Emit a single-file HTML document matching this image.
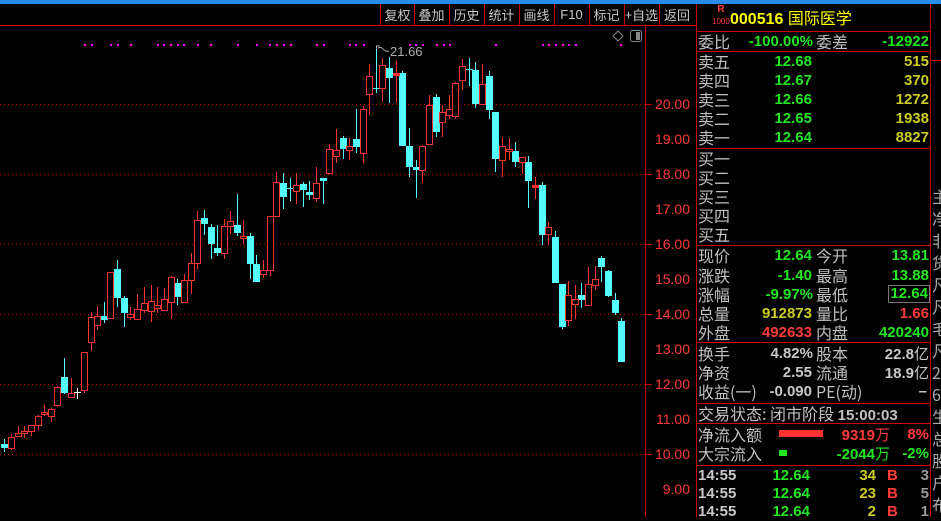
<!DOCTYPE html>
<html><head><meta charset="utf-8"><style>
*{margin:0;padding:0;box-sizing:border-box}
body{width:941px;height:517px;background:#000;overflow:hidden;position:relative;font-family:"Liberation Sans","Noto Sans CJK SC",sans-serif}
.a{position:absolute;white-space:nowrap;line-height:19px}
.l{color:#c0c0c0;font-size:16px;font-family:"Noto Sans CJK SC",sans-serif;left:698px}
.n{font-size:15px;font-weight:bold;text-align:right}
.g{color:#22e622}.y{color:#cccc22}.r{color:#ff3a3a}.w{color:#c8c8c8}
.btn{position:absolute;top:5px;height:20px;color:#c8c8c8;font-size:13px;text-align:center;line-height:20px;font-family:"Noto Sans CJK SC",sans-serif}
.ax{position:absolute;right:251px;color:#ff3a3a;font-size:14px;line-height:14px}
</style></head><body>
<div style="position:absolute;left:0;top:0;width:941px;height:4px;background:#2a8ce8"></div>
<div style="position:absolute;left:0;top:25px;width:696px;height:1px;background:#c00"></div>
<div class="btn" style="left:381px;width:33px">复权</div>
<div class="btn" style="left:414px;width:35px">叠加</div>
<div class="btn" style="left:449px;width:35px">历史</div>
<div class="btn" style="left:484px;width:35px">统计</div>
<div class="btn" style="left:519px;width:35px">画线</div>
<div class="btn" style="left:554px;width:35px;font-family:'Liberation Sans',sans-serif">F10</div>
<div class="btn" style="left:589px;width:35px">标记</div>
<div class="btn" style="left:624px;width:35px">+自选</div>
<div class="btn" style="left:659px;width:36px">返回</div>
<svg width="941" height="517" style="position:absolute;left:0;top:0">
<g stroke="#c00" stroke-width="1">
<line x1="380.5" y1="4" x2="380.5" y2="25"/><line x1="414.5" y1="4" x2="414.5" y2="25"/><line x1="449.5" y1="4" x2="449.5" y2="25"/><line x1="484.5" y1="4" x2="484.5" y2="25"/><line x1="519.5" y1="4" x2="519.5" y2="25"/><line x1="554.5" y1="4" x2="554.5" y2="25"/><line x1="589.5" y1="4" x2="589.5" y2="25"/><line x1="624.5" y1="4" x2="624.5" y2="25"/><line x1="659.5" y1="4" x2="659.5" y2="25"/>
<line x1="645.5" y1="25" x2="645.5" y2="517"/>
<line x1="696.5" y1="4" x2="696.5" y2="517"/><line x1="930.5" y1="4" x2="930.5" y2="517"/>
<line x1="931" y1="60.5" x2="941" y2="60.5"/>
<line x1="696" y1="31.5" x2="930" y2="31.5"/><line x1="696" y1="51.5" x2="930" y2="51.5"/><line x1="696" y1="148.5" x2="930" y2="148.5"/><line x1="696" y1="245.5" x2="930" y2="245.5"/><line x1="696" y1="342.5" x2="930" y2="342.5"/><line x1="696" y1="403.5" x2="930" y2="403.5"/><line x1="696" y1="423.5" x2="930" y2="423.5"/><line x1="696" y1="465.5" x2="930" y2="465.5"/>
</g>
<g stroke="#c00" stroke-dasharray="1,3">
<line x1="0" y1="104.5" x2="645" y2="104.5"/><line x1="0" y1="174.5" x2="645" y2="174.5"/><line x1="0" y1="244.5" x2="645" y2="244.5"/><line x1="0" y1="314.5" x2="645" y2="314.5"/><line x1="0" y1="384.5" x2="645" y2="384.5"/><line x1="0" y1="454.5" x2="645" y2="454.5"/>
</g>
<g stroke="#c00"><line x1="645" y1="104.5" x2="652" y2="104.5"/><line x1="645" y1="174.5" x2="652" y2="174.5"/><line x1="645" y1="244.5" x2="652" y2="244.5"/><line x1="645" y1="314.5" x2="652" y2="314.5"/><line x1="645" y1="384.5" x2="652" y2="384.5"/><line x1="645" y1="454.5" x2="652" y2="454.5"/></g>
<path d="M618 31 L623 36 L618 41 L613 36Z" fill="none" stroke="#888"/>
<rect x="630.5" y="30.5" width="11" height="11" rx="2" fill="none" stroke="#888"/><rect x="636" y="32" width="4" height="8" fill="#888"/>
<g fill="#ff00ff">
<rect x="84" y="44" width="2" height="2"/><rect x="91" y="44" width="2" height="2"/><rect x="110" y="44" width="2" height="2"/><rect x="117" y="44" width="2" height="2"/><rect x="130" y="44" width="2" height="2"/><rect x="157" y="44" width="2" height="2"/><rect x="163" y="44" width="2" height="2"/><rect x="170" y="44" width="2" height="2"/><rect x="177" y="44" width="2" height="2"/><rect x="183" y="44" width="2" height="2"/><rect x="197" y="44" width="2" height="2"/><rect x="210" y="44" width="2" height="2"/><rect x="237" y="44" width="2" height="2"/><rect x="256" y="44" width="2" height="2"/><rect x="269" y="44" width="2" height="2"/><rect x="276" y="44" width="2" height="2"/><rect x="283" y="44" width="2" height="2"/><rect x="290" y="44" width="2" height="2"/><rect x="316" y="44" width="2" height="2"/><rect x="323" y="44" width="2" height="2"/><rect x="349" y="44" width="2" height="2"/><rect x="355" y="44" width="2" height="2"/><rect x="363" y="44" width="2" height="2"/><rect x="409" y="44" width="2" height="2"/><rect x="415" y="44" width="2" height="2"/><rect x="422" y="44" width="2" height="2"/><rect x="436" y="44" width="2" height="2"/><rect x="443" y="44" width="2" height="2"/><rect x="449" y="44" width="2" height="2"/><rect x="495" y="44" width="2" height="2"/><rect x="542" y="44" width="2" height="2"/><rect x="548" y="44" width="2" height="2"/><rect x="555" y="44" width="2" height="2"/><rect x="562" y="44" width="2" height="2"/><rect x="568" y="44" width="2" height="2"/><rect x="575" y="44" width="2" height="2"/><rect x="620" y="44" width="2" height="2"/>
</g>
<path d="M376.5 49 V46 H380 M378 48 Q381 46 384 50 Q387 52 389 51" fill="none" stroke="#aaa"/>
<text x="390" y="56" fill="#b0b0b0" font-size="13" font-family="Liberation Sans">21.66</text>
<g id="c"></g>
</svg>
<svg width="646" height="517" style="position:absolute;left:0;top:0">
<g fill="#54ffff">
<!-- cyan: wick + body -->
<rect x="4" y="439" width="1" height="13"/><rect x="1" y="444" width="7" height="4"/>
<rect x="64" y="358" width="1" height="36"/><rect x="61" y="377" width="7" height="16"/>
<rect x="104" y="302" width="1" height="21"/><rect x="101" y="316" width="7" height="4"/>
<rect x="117" y="260" width="1" height="47"/><rect x="114" y="269" width="7" height="29"/>
<rect x="124" y="296" width="1" height="31"/><rect x="121" y="298" width="7" height="15"/>
<rect x="177" y="279" width="1" height="26"/><rect x="174" y="283" width="7" height="14"/>
<rect x="204" y="210" width="1" height="25"/><rect x="201" y="218" width="7" height="6"/>
<rect x="211" y="224" width="1" height="35"/><rect x="208" y="227" width="7" height="17"/>
<rect x="217" y="225" width="1" height="31"/><rect x="214" y="248" width="7" height="5"/>
<rect x="237" y="194" width="1" height="42"/><rect x="234" y="225" width="7" height="8"/>
<rect x="250" y="233" width="1" height="46"/><rect x="247" y="236" width="7" height="28"/>
<rect x="256" y="255" width="1" height="27"/><rect x="253" y="264" width="7" height="18"/>
<rect x="283" y="173" width="1" height="36"/><rect x="280" y="183" width="7" height="14"/>
<rect x="290" y="178" width="1" height="23"/><rect x="287" y="188" width="7" height="1"/>
<rect x="303" y="182" width="1" height="25"/><rect x="300" y="184" width="7" height="6"/>
<rect x="309" y="181" width="1" height="19"/><rect x="306" y="192" width="7" height="3"/>
<rect x="323" y="178" width="1" height="26"/><rect x="320" y="178" width="7" height="3"/>
<rect x="343" y="136" width="1" height="23"/><rect x="340" y="138" width="7" height="11"/>
<rect x="356" y="109" width="1" height="44"/><rect x="353" y="139" width="7" height="8"/>
<rect x="376" y="49" width="1" height="44"/><rect x="373" y="88" width="7" height="1"/>
<rect x="389" y="57" width="1" height="46"/><rect x="386" y="68" width="7" height="10"/>
<rect x="402" y="71" width="1" height="75"/><rect x="399" y="73" width="7" height="73"/>
<rect x="409" y="128" width="1" height="49"/><rect x="406" y="146" width="7" height="21"/>
<rect x="416" y="160" width="1" height="38"/><rect x="413" y="167" width="7" height="3"/>
<rect x="436" y="94" width="1" height="43"/><rect x="433" y="97" width="7" height="35"/>
<rect x="469" y="58" width="1" height="28"/><rect x="466" y="69" width="7" height="1"/>
<rect x="475" y="62" width="1" height="46"/><rect x="472" y="70" width="7" height="34"/>
<rect x="489" y="71" width="1" height="48"/><rect x="486" y="76" width="7" height="34"/>
<rect x="495" y="112" width="1" height="60"/><rect x="492" y="112" width="7" height="47"/>
<rect x="515" y="142" width="1" height="25"/><rect x="512" y="151" width="7" height="11"/>
<rect x="528" y="156" width="1" height="52"/><rect x="525" y="162" width="7" height="19"/>
<rect x="542" y="182" width="1" height="63"/><rect x="539" y="185" width="7" height="50"/>
<rect x="555" y="231" width="1" height="52"/><rect x="552" y="237" width="7" height="46"/>
<rect x="562" y="284" width="1" height="45"/><rect x="559" y="284" width="7" height="43"/>
<rect x="581" y="283" width="1" height="25"/><rect x="578" y="295" width="7" height="5"/>
<rect x="601" y="256" width="1" height="26"/><rect x="598" y="258" width="7" height="9"/>
<rect x="608" y="270" width="1" height="27"/><rect x="605" y="271" width="7" height="25"/>
<rect x="615" y="293" width="1" height="22"/><rect x="612" y="300" width="7" height="13"/>
<rect x="621" y="318" width="1" height="44"/><rect x="618" y="321" width="7" height="41"/>
</g>
<g fill="#fff"><rect x="77" y="388" width="1" height="11"/><rect x="74" y="392" width="7" height="1"/></g>
<g fill="#ff3232">
<rect x="11" y="434" width="1" height="16"/><rect x="18" y="426" width="1" height="11"/><rect x="24" y="426" width="1" height="12"/><rect x="31" y="425" width="1" height="11"/><rect x="38" y="415" width="1" height="15"/><rect x="44" y="405" width="1" height="11"/><rect x="51" y="408" width="1" height="14"/><rect x="57" y="386" width="1" height="21"/><rect x="71" y="378" width="1" height="20"/><rect x="84" y="352" width="1" height="41"/><rect x="91" y="312" width="1" height="39"/><rect x="97" y="306" width="1" height="24"/><rect x="110" y="272" width="1" height="47"/><rect x="130" y="307" width="1" height="13"/><rect x="137" y="294" width="1" height="26"/><rect x="144" y="287" width="1" height="26"/><rect x="151" y="285" width="1" height="37"/><rect x="157" y="287" width="1" height="26"/><rect x="164" y="288" width="1" height="23"/><rect x="171" y="276" width="1" height="43"/><rect x="184" y="274" width="1" height="29"/><rect x="191" y="253" width="1" height="41"/><rect x="197" y="211" width="1" height="58"/><rect x="224" y="219" width="1" height="40"/><rect x="230" y="211" width="1" height="23"/><rect x="243" y="220" width="1" height="24"/><rect x="263" y="260" width="1" height="18"/><rect x="270" y="216" width="1" height="60"/><rect x="276" y="172" width="1" height="45"/><rect x="296" y="173" width="1" height="31"/><rect x="316" y="167" width="1" height="35"/><rect x="329" y="144" width="1" height="30"/><rect x="336" y="129" width="1" height="34"/><rect x="349" y="138" width="1" height="22"/><rect x="363" y="106" width="1" height="57"/><rect x="369" y="64" width="1" height="51"/><rect x="382" y="58" width="1" height="44"/><rect x="396" y="61" width="1" height="42"/><rect x="393" y="73" width="7" height="3"/><rect x="422" y="145" width="1" height="38"/><rect x="429" y="95" width="1" height="50"/><rect x="442" y="105" width="1" height="32"/><rect x="449" y="95" width="1" height="24"/><rect x="455" y="82" width="1" height="37"/><rect x="462" y="59" width="1" height="31"/><rect x="482" y="64" width="1" height="41"/><rect x="502" y="137" width="1" height="40"/><rect x="509" y="138" width="1" height="22"/><rect x="522" y="157" width="1" height="17"/><rect x="535" y="177" width="1" height="22"/><rect x="532" y="185" width="7" height="3"/><rect x="548" y="222" width="1" height="23"/><rect x="568" y="281" width="1" height="45"/><rect x="575" y="285" width="1" height="34"/><rect x="588" y="267" width="1" height="39"/><rect x="595" y="266" width="1" height="24"/>
</g>
<g fill="#000" stroke="#ff3232">
<rect x="8.5" y="437.5" width="6" height="11"/><rect x="15.5" y="433.5" width="6" height="3"/><rect x="21.5" y="431.5" width="6" height="2"/><rect x="28.5" y="425.5" width="6" height="6"/><rect x="35.5" y="416.5" width="6" height="9"/><rect x="41.5" y="412.5" width="6" height="2"/><rect x="48.5" y="409.5" width="6" height="7"/><rect x="54.5" y="387.5" width="6" height="18"/><rect x="68.5" y="393.5" width="6" height="4"/><rect x="81.5" y="352.5" width="6" height="38"/><rect x="88.5" y="317.5" width="6" height="25"/><rect x="94.5" y="316.5" width="6" height="9"/><rect x="107.5" y="272.5" width="6" height="46"/><rect x="127.5" y="314.5" width="6" height="3"/><rect x="134.5" y="309.5" width="6" height="10"/><rect x="141.5" y="303.5" width="6" height="7"/><rect x="148.5" y="301.5" width="6" height="10"/><rect x="154.5" y="305.5" width="6" height="3"/><rect x="161.5" y="299.5" width="6" height="11"/><rect x="168.5" y="277.5" width="6" height="25"/><rect x="181.5" y="280.5" width="6" height="22"/><rect x="188.5" y="263.5" width="6" height="17"/><rect x="194.5" y="220.5" width="6" height="43"/><rect x="221.5" y="226.5" width="6" height="27"/><rect x="227.5" y="221.5" width="6" height="5"/><rect x="240.5" y="236.5" width="6" height="2"/><rect x="260.5" y="270.5" width="6" height="4"/><rect x="267.5" y="216.5" width="6" height="54"/><rect x="273.5" y="182.5" width="6" height="34"/><rect x="293.5" y="185.5" width="6" height="6"/><rect x="313.5" y="183.5" width="6" height="15"/><rect x="326.5" y="149.5" width="6" height="24"/><rect x="333.5" y="150.5" width="6" height="6"/><rect x="346.5" y="146.5" width="6" height="4"/><rect x="360.5" y="109.5" width="6" height="44"/><rect x="366.5" y="76.5" width="6" height="18"/><rect x="379.5" y="65.5" width="6" height="23"/><rect x="419.5" y="146.5" width="6" height="24"/><rect x="426.5" y="105.5" width="6" height="39"/><rect x="439.5" y="112.5" width="6" height="10"/><rect x="446.5" y="109.5" width="6" height="6"/><rect x="452.5" y="83.5" width="6" height="33"/><rect x="459.5" y="66.5" width="6" height="14"/><rect x="479.5" y="84.5" width="6" height="20"/><rect x="499.5" y="146.5" width="6" height="14"/><rect x="506.5" y="149.5" width="6" height="2"/><rect x="519.5" y="157.5" width="6" height="5"/><rect x="545.5" y="227.5" width="6" height="7"/><rect x="565.5" y="295.5" width="6" height="25"/><rect x="572.5" y="299.5" width="6" height="5"/><rect x="585.5" y="284.5" width="6" height="21"/><rect x="592.5" y="279.5" width="6" height="6"/>
</g>
</svg>
<div class="ax" style="top:97px">20.00</div><div class="ax" style="top:132px">19.00</div><div class="ax" style="top:167px">18.00</div><div class="ax" style="top:202px">17.00</div><div class="ax" style="top:237px">16.00</div><div class="ax" style="top:272px">15.00</div><div class="ax" style="top:307px">14.00</div><div class="ax" style="top:342px">13.00</div><div class="ax" style="top:377px">12.00</div><div class="ax" style="top:412px">11.00</div><div class="ax" style="top:447px">10.00</div><div class="ax" style="top:482px">9.00</div>

<!-- right panel -->
<div class="a" style="left:714px;top:5px;color:#ff3a3a;font-size:10px;line-height:10px;font-weight:bold;width:14px;text-align:center">R</div>
<div class="a" style="left:712px;top:17px;color:#ff3a3a;font-size:8px;line-height:10px">1000</div>
<div class="a" style="left:730px;top:8px;color:#ffff00;font-size:16px;font-weight:bold;line-height:19px">000516 <span style="font-weight:normal;font-family:'Noto Sans CJK SC',sans-serif">国际医学</span></div>

<div class="a l" style="top:32px">委比</div><div class="a n g" style="right:128px;top:32px">-100.00%</div><div class="a l" style="left:816px;top:32px">委差</div><div class="a n g" style="right:12px;top:32px">-12922</div>

<div class="a l" style="top:52px">卖五</div><div class="a n g" style="right:129px;top:52px">12.68</div><div class="a n y" style="right:12px;top:52px">515</div>
<div class="a l" style="top:71px">卖四</div><div class="a n g" style="right:129px;top:71px">12.67</div><div class="a n y" style="right:12px;top:71px">370</div>
<div class="a l" style="top:90px">卖三</div><div class="a n g" style="right:129px;top:90px">12.66</div><div class="a n y" style="right:12px;top:90px">1272</div>
<div class="a l" style="top:109px">卖二</div><div class="a n g" style="right:129px;top:109px">12.65</div><div class="a n y" style="right:12px;top:109px">1938</div>
<div class="a l" style="top:128px">卖一</div><div class="a n g" style="right:129px;top:128px">12.64</div><div class="a n y" style="right:12px;top:128px">8827</div>

<div class="a l" style="top:149px">买一</div><div class="a l" style="top:168px">买二</div><div class="a l" style="top:187px">买三</div><div class="a l" style="top:206px">买四</div><div class="a l" style="top:225px">买五</div>

<div class="a l" style="top:246px">现价</div><div class="a n g" style="right:129px;top:246px">12.64</div><div class="a l" style="left:816px;top:246px">今开</div><div class="a n g" style="right:12px;top:246px">13.81</div>
<div class="a l" style="top:266px">涨跌</div><div class="a n g" style="right:129px;top:266px">-1.40</div><div class="a l" style="left:816px;top:266px">最高</div><div class="a n g" style="right:12px;top:266px">13.88</div>
<div class="a l" style="top:285px">涨幅</div><div class="a n g" style="right:128px;top:285px">-9.97%</div><div class="a l" style="left:816px;top:285px">最低</div><div class="a n g" style="right:11px;top:285px;border:1px solid #777;padding:0 1px;line-height:16px;height:18px">12.64</div>
<div class="a l" style="top:304px">总量</div><div class="a n y" style="right:129px;top:304px">912873</div><div class="a l" style="left:816px;top:304px">量比</div><div class="a n r" style="right:12px;top:304px">1.66</div>
<div class="a l" style="top:323px">外盘</div><div class="a n r" style="right:129px;top:323px">492633</div><div class="a l" style="left:816px;top:323px">内盘</div><div class="a n g" style="right:12px;top:323px">420240</div>

<div class="a l" style="top:344px">换手</div><div class="a n w" style="right:128px;top:344px">4.82%</div><div class="a l" style="left:816px;top:344px">股本</div><div class="a n w" style="right:12px;top:344px">22.8<span style="font-weight:normal;font-family:'Noto Sans CJK SC'">亿</span></div>
<div class="a l" style="top:363px">净资</div><div class="a n w" style="right:129px;top:363px">2.55</div><div class="a l" style="left:816px;top:363px">流通</div><div class="a n w" style="right:12px;top:363px">18.9<span style="font-weight:normal;font-family:'Noto Sans CJK SC'">亿</span></div>
<div class="a l" style="top:382px">收益(一)</div><div class="a n w" style="right:129px;top:382px">-0.090</div><div class="a l" style="left:816px;top:382px">PE(动)</div><div class="a n w" style="right:14px;top:382px">–</div>

<div class="a l" style="top:404px">交易状态: 闭市阶段 <span style="font-family:'Liberation Sans';font-weight:bold;font-size:15px">15:00:03</span></div>

<div class="a l" style="top:425px">净流入额</div><div style="position:absolute;left:779px;top:430px;width:44px;height:7px;background:#ff3232"></div><div class="a n r" style="right:51px;top:425px">9319<span style="font-weight:normal;font-family:'Noto Sans CJK SC'">万</span></div><div class="a n r" style="right:12px;top:425px">8%</div>
<div class="a l" style="top:444px">大宗流入</div><div style="position:absolute;left:779px;top:450px;width:8px;height:6px;background:#22e622"></div><div class="a n g" style="right:51px;top:444px">-2044<span style="font-weight:normal;font-family:'Noto Sans CJK SC'">万</span></div><div class="a n g" style="right:12px;top:444px">-2%</div>

<div class="a n w" style="left:698px;top:466px;text-align:left">14:55</div><div class="a n g" style="right:131px;top:466px">12.64</div><div class="a n y" style="right:65px;top:466px">34</div><div class="a n r" style="left:887px;top:466px">B</div><div class="a n w" style="right:12px;top:466px;color:#999">3</div>
<div class="a n w" style="left:698px;top:484px;text-align:left">14:55</div><div class="a n g" style="right:131px;top:484px">12.64</div><div class="a n y" style="right:65px;top:484px">23</div><div class="a n r" style="left:887px;top:484px">B</div><div class="a n w" style="right:12px;top:484px;color:#999">5</div>
<div class="a n w" style="left:698px;top:502px;text-align:left">14:55</div><div class="a n g" style="right:131px;top:502px">12.64</div><div class="a n y" style="right:65px;top:502px">2</div><div class="a n r" style="left:887px;top:502px">B</div><div class="a n w" style="right:12px;top:502px;color:#999">1</div>

<div class="a" style="left:932px;top:185px;color:#aaa;font-size:16px;line-height:22px;font-family:'Noto Sans CJK SC',sans-serif;width:20px;white-space:normal">主净非货凡凡毛凡2  6生总股户布</div>
</body></html>
